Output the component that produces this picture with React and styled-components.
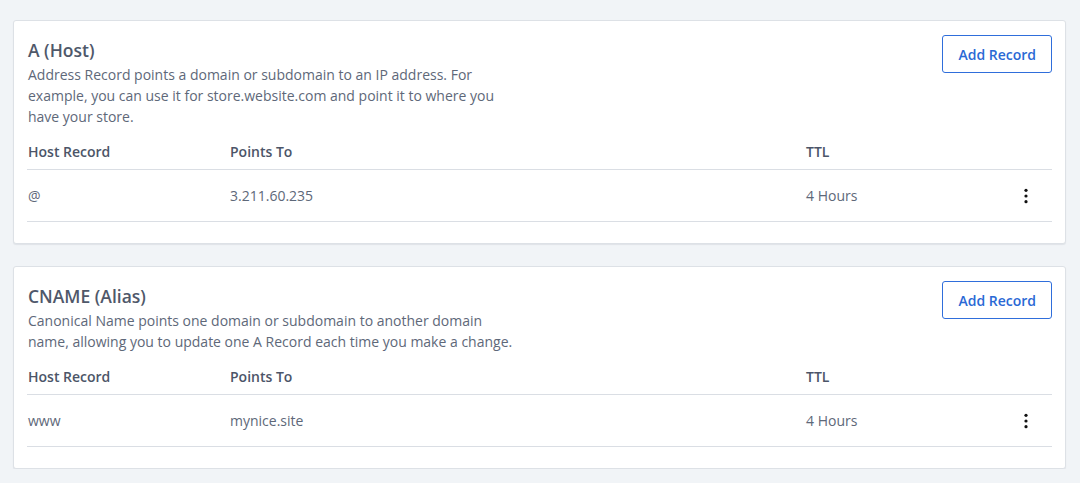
import React from "react";
import styled, { createGlobalStyle } from "styled-components";

const GlobalStyle = createGlobalStyle`
  html, body { margin: 0; padding: 0; background: #f1f4f7; }
  body { font-family: "Open Sans", "Liberation Sans", sans-serif; -webkit-font-smoothing: antialiased; }
  * { box-sizing: border-box; }
`;

const Page = styled.div`
  padding: 20px 14px 0 13px;
  display: flex;
  flex-direction: column;
  gap: 22px;
`;

const Card = styled.section`
  background: #fff;
  border: 1px solid #dde1e6;
  border-radius: 3px;
  box-shadow: 0 1px 1px rgba(30, 40, 60, 0.08);
  padding: 14px 13px 21px 13px;
`;

const Header = styled.div`
  display: flex;
  justify-content: space-between;
  align-items: flex-start;
`;

const Info = styled.div`
  padding-top: 2px;
  padding-left: 1px;
`;

const Title = styled.h2`
  margin: 0;
  font-size: 17.5px;
  line-height: 27px;
  font-weight: 600;
  color: #4f586a;
`;

const Desc = styled.p`
  margin: 0;
  max-width: 488px;
  font-size: 14px;
  line-height: 21px;
  color: #5e6879;
`;

const AddButton = styled.button`
  height: 38px;
  padding: 0 15px;
  background: #fff;
  border: 1px solid #2f6edb;
  border-radius: 3px;
  color: #2a69d5;
  font-family: inherit;
  font-size: 14px;
  font-weight: 600;
  cursor: pointer;
`;

const Grid = styled.div`
  display: grid;
  grid-template-columns: 202px 576px 1fr 52px;
  border-bottom: 1px solid #dadee4;
  padding-left: 1px;
  height: ${(p) => (p.$head ? "28px" : "52px")};
  margin-top: ${(p) => (p.$head ? "15px" : "0")};
  align-items: ${(p) => (p.$head ? "start" : "center")};
`;

const HeadCell = styled.div`
  font-size: 14px;
  line-height: 20px;
  font-weight: 600;
  color: #4c5568;
`;

const Cell = styled.div`
  font-size: 14px;
  line-height: 20px;
  color: #5e6879;
`;

const Kebab = styled.button`
  justify-self: center;
  width: 20px;
  height: 24px;
  padding: 0;
  border: 0;
  background: transparent;
  display: flex;
  align-items: center;
  justify-content: center;
  cursor: pointer;
`;

const Dots = () => (
  <svg width="4" height="16" viewBox="0 0 4 16">
    <circle cx="2" cy="2.3" r="1.6" fill="#111" />
    <circle cx="2" cy="8" r="1.6" fill="#111" />
    <circle cx="2" cy="13.7" r="1.6" fill="#111" />
  </svg>
);

const records = [
  {
    title: "A (Host)",
    desc: "Address Record points a domain or subdomain to an IP address. For example, you can use it for store.website.com and point it to where you have your store.",
    host: "@",
    points: "3.211.60.235",
    ttl: "4 Hours",
  },
  {
    title: "CNAME (Alias)",
    desc: "Canonical Name points one domain or subdomain to another domain name, allowing you to update one A Record each time you make a change.",
    host: "www",
    points: "mynice.site",
    ttl: "4 Hours",
  },
];

export default function App() {
  return (
    <>
      <GlobalStyle />
      <Page>
        {records.map((r) => (
          <Card key={r.title}>
            <Header>
              <Info>
                <Title>{r.title}</Title>
                <Desc>{r.desc}</Desc>
              </Info>
              <AddButton>Add Record</AddButton>
            </Header>
            <Grid $head>
              <HeadCell>Host Record</HeadCell>
              <HeadCell>Points To</HeadCell>
              <HeadCell>TTL</HeadCell>
              <div />
            </Grid>
            <Grid>
              <Cell>{r.host}</Cell>
              <Cell>{r.points}</Cell>
              <Cell>{r.ttl}</Cell>
              <Kebab aria-label="More actions">
                <Dots />
              </Kebab>
            </Grid>
          </Card>
        ))}
      </Page>
    </>
  );
}
